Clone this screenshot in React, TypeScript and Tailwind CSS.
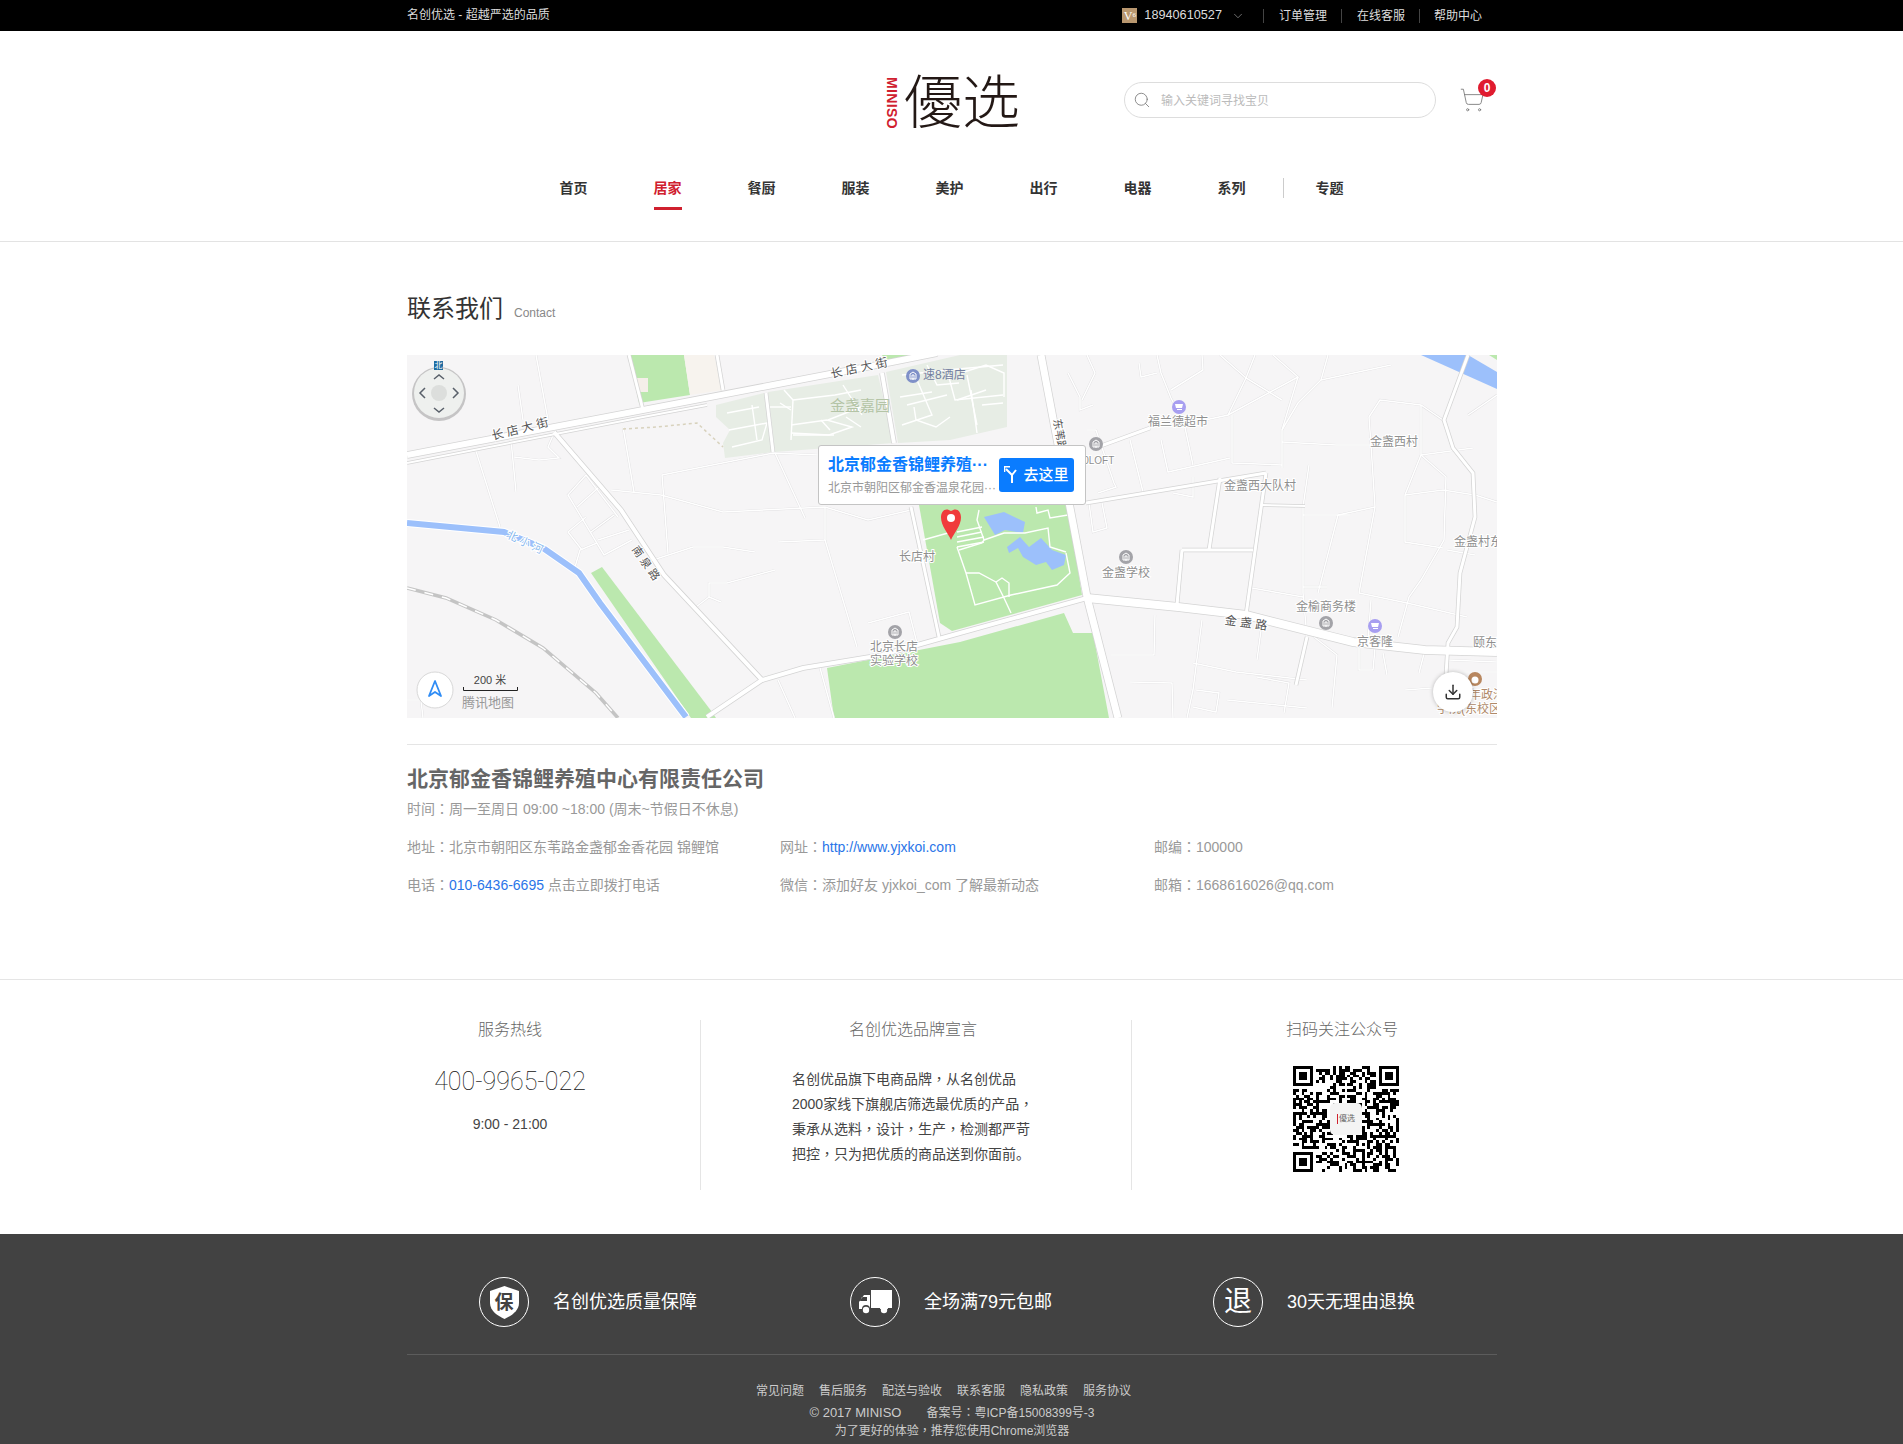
import type { ReactNode } from "react";
import { ChevronDown, Download, Search, ShoppingCart } from "lucide-react";

const NAV = ["首页", "居家", "餐厨", "服装", "美护", "出行", "电器", "系列"];
const FOOT_LINKS = ["常见问题", "售后服务", "配送与验收", "联系客服", "隐私政策", "服务协议"];
const COLON = "\uFF1A";
const COMMA = "\uFF0C";

// thin alleys on the map
const LANES = [
  "129,0 141,65", "111,30 116,65", "104,85 109,137", "107,102 132,105 152,103 141,92 147,78", "68,93 93,172",
  "216,72 227,137", "204,135 254,140 316,157 418,152 461,165 504,155", "255,120 261,198", "255,120 366,98 411,100",
  "368,98 398,163", "418,153 418,185 371,187", "418,185 450,292", "246,205 286,192 316,192 348,197",
  "368,215 320,228 302,228 302,242 314,247", "302,242 289,252", "371,325 388,363", "413,313 427,363",
  "461,268 502,257 511,292", "179,120 161,140 197,200 225,185", "179,120 211,162", "170,152 191,133", "184,177 207,160",
  "161,177 179,162", "161,177 175,195", "191,185 222,175", "168,212 173,195 190,188", "0,345 14,345 16,363",
  "750,0 754,18 764,43 777,68 786,110", "732,8 734,22 750,18", "795,0 796,15 764,35", "813,0 839,23 875,45",
  "848,0 839,23 821,60 766,72", "866,0 891,22 821,60", "891,22 875,75 875,113", "921,0 914,25 984,10",
  "914,25 891,48 875,75", "875,87 929,90 964,90", "962,62 964,90 968,152 952,238", "962,62 973,45 1014,50 1036,65",
  "1014,50 1014,100 998,140 998,187 1036,193", "1014,100 1066,93", "1014,100 1039,122 1037,185 1014,225 1002,242 991,282",
  "998,140 1036,135 1068,140 1090,147", "902,110 896,152 896,238 900,282", "931,160 968,152", "931,160 911,238",
  "896,160 943,160", "896,232 920,232", "825,60 825,108 875,110", "723,85 736,137", "754,85 761,117 823,103",
  "766,138 786,142 786,122", "682,148 686,177 700,173 695,148", "661,18 673,42 673,55 686,50", "680,0 688,18 675,45",
  "680,75 689,75 707,128 709,132 691,138", "748,260 747,300 704,300", "795,265 786,335 780,363", "855,268 850,305",
  "786,308 829,317 900,325", "907,282 930,300 925,353", "820,345 900,353", "789,335 812,338 809,357 786,352",
  "850,322 882,328 877,358", "723,327 765,328 766,363", "998,335 1025,333", "968,293 966,315 952,315 952,285",
  "1041,305 1090,307", "1041,317 1090,317", "952,238 1000,248", "964,245 961,285", "845,233 896,242",
  "1061,60 1090,40", "1040,195 1068,200", "1000,248 1060,262", "1018,295 1012,318", "976,298 980,320",
];

const PARK_PATHS = [
  "386,45 428,40 454,35", "386,45 384,85", "384,70 420,65 445,72 422,80 384,78", "436,30 455,60", "361,52 384,52",
  "377,35 386,45", "373,48 384,55", "386,80 427,80", "414,65 423,75", "439,62 454,72", "421,65 454,52",
  "320,58 352,52", "322,75 360,68 355,85 325,92", "345,50 350,85", "495,20 540,15 596,10", "540,15 548,45 596,40",
  "500,50 540,40", "510,25 525,60 495,70", "560,20 570,70", "575,50 596,48", "520,10 530,30 552,28",
  "493,42 525,37", "507,52 509,65 529,72 543,62", "550,45 579,35", "564,35 570,78", "554,18 579,10 597,18 597,42",
  "550,192 559,218 568,250 604,240 650,230 663,218 659,198", "559,218 572,218 589,227 595,223 602,228 602,242",
  "589,227 597,243 604,258", "577,185 597,178 618,178 641,173 643,192 659,197", "572,155 570,165 577,185 575,188 552,195",
  "550,177 575,172", "550,182 575,177", "550,187 577,182", "550,192 577,187", "516,185 541,178",
  "629,152 630,158 641,155 643,163 661,160",
];

const ROADS: [string, number][] = [
  ["0,100 236,55 480,8 530,-2", 6],
  ["0,108 236,62 300,50", 2],
  ["147,77 214,155 257,220 355,325 300,362", 4],
  ["355,325 396,313 475,300 553,278 680,243", 4],
  ["475,18 487,88", 4],
  ["359,38 366,97", 3],
  ["504,152 532,282", 3],
  ["222,0 236,55", 3],
  ["310,0 316,35", 3],
  ["691,92 743,73", 3],
  ["679,148 859,118", 3],
  ["813,123 802,195", 3],
  ["859,118 839,260", 3],
  ["775,195 846,195", 3],
  ["775,195 770,250", 3],
  ["855,150 898,151", 2],
  ["900,282 889,330", 3],
  ["1061,0 1037,65 1046,93 1066,118 1068,162 1053,218 1050,272 1041,288 1039,320", 3],
  ["634,0 680,242 711,363", 7],
  ["680,243 771,252 839,260 946,287 1018,295 1090,297", 8],
];

const QR_SIZE = 37;

function buildQr() {
  let seed = 20170;
  const cells: [number, number][] = [];
  const inFinder = (x: number, y: number) =>
    (x < 8 && y < 8) || (x >= QR_SIZE - 8 && y < 8) || (x < 8 && y >= QR_SIZE - 8);
  for (let y = 0; y < QR_SIZE; y++) {
    for (let x = 0; x < QR_SIZE; x++) {
      seed = (seed * 1103515245 + 12345) % 2147483648;
      if (!inFinder(x, y) && seed % 100 > 50) cells.push([x, y]);
    }
  }
  return cells;
}

const QR_CELLS = buildQr();

// full-width punctuation sits centred in the reference, which is how the TC cut draws it
function Mark({ c }: { c: string }) {
  return <span className="font-['Noto_Sans_CJK_TC'] leading-none">{c}</span>;
}

function Finder({ x, y }: { x: number; y: number }) {
  return (
    <g>
      <rect x={x} y={y} width="7" height="7" fill="#000" />
      <rect x={x + 1} y={y + 1} width="5" height="5" fill="#fff" />
      <rect x={x + 2} y={y + 2} width="3" height="3" fill="#000" />
    </g>
  );
}

function QrCode() {
  return (
    <div className="relative ml-[106px] mt-[26px] h-[106px] w-[106px]">
      <svg viewBox={`0 0 ${QR_SIZE} ${QR_SIZE}`} className="h-full w-full" shapeRendering="crispEdges">
        {QR_CELLS.map(([x, y]) => (
          <rect key={`${x}-${y}`} x={x} y={y} width="1" height="1" fill="#000" />
        ))}
        <Finder x={0} y={0} />
        <Finder x={QR_SIZE - 7} y={0} />
        <Finder x={0} y={QR_SIZE - 7} />
      </svg>
      <div className="absolute left-[37px] top-[37px] flex h-[32px] w-[32px] items-center justify-center rounded-[5px] bg-[#f4f4f4] text-[8px] text-[#666]">
        <span className="mr-px h-[10px] w-px bg-[#d0202f]" />
        優选
      </div>
    </div>
  );
}

function Label({ x, y, text, size = 12, fill = "#8f8f8f", rotate }: { x: number; y: number; text: string; size?: number; fill?: string; rotate?: number }) {
  return (
    <text
      x={x}
      y={y}
      textAnchor="middle"
      dominantBaseline="central"
      fontSize={size}
      fill={fill}
      stroke="#fff"
      strokeWidth="2"
      paintOrder="stroke"
      transform={rotate ? `rotate(${rotate} ${x} ${y})` : undefined}
    >
      {text}
    </text>
  );
}

function Poi({ x, y, kind }: { x: number; y: number; kind: "gray" | "shop" | "hotel" }) {
  const fill = kind === "shop" ? "#a79ef0" : kind === "hotel" ? "#7f90c8" : "#a3a3a8";
  return (
    <g>
      <circle cx={x} cy={y} r="7" fill={fill} />
      {kind === "shop" ? (
        <path d={`M${x - 4} ${y - 3}h8l-1 4h-6zM${x - 2} ${y + 2}h5v1h-5z`} fill="#fff" />
      ) : (
        <path d={`M${x - 3} ${y + 3}v-5l3-2 3 2v5zM${x - 1} ${y + 3}v-4h2v4z`} fill="none" stroke="#fff" strokeWidth="1" />
      )}
    </g>
  );
}

function MapView() {
  return (
    <div className="relative mt-[30px] h-[363px] w-[1090px] overflow-hidden bg-[#f6f5f6]">
      <svg viewBox="0 0 1090 363" className="block h-full w-full">
        <polygon points="222,0 277,0 283,40 232,48" fill="#bbe8ae" />
        <polygon points="277,0 307,0 316,35 283,40" fill="#f7f3ee" />
        <rect x="229" y="23" width="12" height="14" fill="#f5efe9" />
        <polygon points="309,50 357,38 366,97 318,103 316,88 323,75 309,62" fill="#e7ede5" />
        <polygon points="361,37 471,20 487,88 368,97" fill="#e7ede5" />
        <polygon points="479,17 553,0 600,0 600,72 543,85 491,88" fill="#e7ede5" />
        <polygon points="475,0 525,0 480,8" fill="#bbe8ae" />
        <polygon points="512,150 661,150 675,240 545,276 533,268" fill="#bbe8ae" />
        <polygon points="420,313 553,287 657,258 666,278 686,278 702,363 427,363" fill="#bbe8ae" />
        <polygon points="184,218 195,212 305,357 309,363 284,363" fill="#bbe8ae" />
        <polygon points="1082,0 1090,0 1090,5" fill="#bbe8ae" />
        <polygon points="577,162 597,157 618,167 616,178 598,175 588,180" fill="#9cc0fb" />
        <polygon points="600,192 613,182 622,192 634,183 645,195 659,200 657,210 645,215 639,207 629,210 616,202 611,193 602,198" fill="#9cc0fb" />
        <polygon points="1014,0 1061,0 1090,17 1090,34" fill="#9cc0fb" />

        {LANES.map((p) => (
          <polyline key={p} points={p} fill="none" stroke="#dedddf" strokeWidth="2.2" />
        ))}
        {LANES.map((p) => (
          <polyline key={`w${p}`} points={p} fill="none" stroke="#fff" strokeWidth="1.5" />
        ))}
        {PARK_PATHS.map((p) => (
          <polyline key={p} points={p} fill="none" stroke="#fff" strokeWidth="1.4" />
        ))}
        <polyline points="216,74 250,72 290,68 316,92" fill="none" stroke="#d8d2bd" strokeWidth="1.5" strokeDasharray="3 3" />

        <polyline points="0,233 39,243 89,265 136,293 189,338 211,363" fill="none" stroke="#c4c4c4" strokeWidth="3.5" />
        <polyline points="0,233 39,243 89,265 136,293 189,338 211,363" fill="none" stroke="#fff" strokeWidth="1.5" strokeDasharray="9 9" />

        {ROADS.map(([p, w]) => (
          <polyline key={`c${p}`} points={p} fill="none" stroke="#d4d4d4" strokeWidth={w + 1.5} />
        ))}
        {ROADS.map(([p, w]) => (
          <polyline key={`r${p}`} points={p} fill="none" stroke="#fff" strokeWidth={w} />
        ))}

        <polyline points="0,168 97,177 136,193 172,218 193,248 279,362" fill="none" stroke="#fff" strokeWidth="8" />
        <polyline points="0,168 97,177 136,193 172,218 193,248 279,362" fill="none" stroke="#9cc0fb" strokeWidth="6" />

        <Label x={113} y={74} text="长 店 大 街" fill="#555" rotate={-14} />
        <Label x={452} y={13} text="长 店 大 街" fill="#555" rotate={-12} />
        <Poi x={506} y={21} kind="hotel" />
        <text x={516} y={20} dominantBaseline="central" fontSize="12" fill="#7480a0">速8酒店</text>
        <text x={453} y={50} textAnchor="middle" dominantBaseline="central" fontSize="15" fill="#b4c4a6">金盏嘉园</text>
        <Label x={118} y={187} text="北 小 河" size={11} fill="#86b8ee" rotate={25} />
        <Label x={239} y={208} text="南 泉 路" size={11} fill="#555" rotate={55} />
        <Label x={510} y={202} text="长店村" />
        <Poi x={488} y={277} kind="gray" />
        <Label x={487} y={292} text="北京长店" />
        <Label x={487} y={306} text="实验学校" />
        <Label x={653} y={80} text="东苇路" size={11} fill="#555" rotate={80} />
        <Poi x={689} y={89} kind="gray" />
        <Label x={689} y={105} text="90LOFT" size={10} />
        <Poi x={772} y={52} kind="shop" />
        <Label x={771} y={67} text="福兰德超市" />
        <Label x={987} y={87} text="金盏西村" />
        <Label x={853} y={131} text="金盏西大队村" />
        <Label x={1071} y={187} text="金盏村东" />
        <Poi x={719} y={202} kind="gray" />
        <Label x={719} y={218} text="金盏学校" />
        <Label x={919} y={252} text="金榆商务楼" />
        <Poi x={919} y={268} kind="gray" />
        <Poi x={968} y={271} kind="shop" />
        <Label x={968} y={287} text="京客隆" />
        <Label x={839} y={268} text="金 盏 路" fill="#555" rotate={8} />
        <Label x={1084} y={288} text="颐东苑" />
        <circle cx={1068} cy={324} r="7" fill="#b8875f" />
        <circle cx={1068} cy={325} r="3.5" fill="#fff" />
        <Label x={1074} y={340} text="青年政治" fill="#b08a6a" />
        <Label x={1064} y={354} text="学院(东校区)" fill="#b08a6a" />

        {/* compass */}
        <circle cx={32} cy={39} r="27" fill="#8a8a8a" opacity="0.45" />
        <circle cx={32} cy={38} r="25" fill="#eef0ee" />
        <circle cx={32} cy={38} r="8" fill="#dcdedc" />
        <path d="M27 24l5-4 5 4M27 53l5 4 5-4M18 33l-5 5 5 5M46 33l5 5-5 5" fill="none" stroke="#59606a" strokeWidth="1.5" />
        <rect x={27} y={6} width="9" height="9" fill="#1e6ba0" />
        <text x={31.5} y={10.5} textAnchor="middle" dominantBaseline="central" fontSize="8" fill="#fff">北</text>

        {/* locate + scale */}
        <circle cx={28} cy={335} r="18" fill="#fff" stroke="#d8d8d8" />
        <path d="M28 326l-6 15 6-4 6 4z" fill="none" stroke="#2f8cf5" strokeWidth="1.8" strokeLinejoin="round" />
        <text x={83} y={325} textAnchor="middle" dominantBaseline="central" fontSize="11" fill="#444">200 米</text>
        <path d="M56.5 332v3.5h54V332" fill="none" stroke="#222" />
        <text x={81} y={347} textAnchor="middle" dominantBaseline="central" fontSize="13" fill="#999">腾讯地图</text>
      </svg>

      <div className="absolute left-[411px] top-[90px] flex h-[60px] w-[268px] items-start rounded-[3px] border border-[#c4c4c4] bg-white pl-[9px] pt-[8px]">
        <div className="w-[168px] shrink-0 overflow-hidden whitespace-nowrap">
          <div className="text-[16px] font-bold leading-[22px] text-[#0a7cff]">北京郁金香锦鲤养殖···</div>
          <div className="mt-[3px] text-[12px] leading-[18px] text-[#999]">北京市朝阳区郁金香温泉花园···</div>
        </div>
        <button className="ml-[3px] mt-[4px] flex h-[34px] w-[75px] shrink-0 items-center justify-center gap-[5px] rounded-[3px] bg-[#0a7cff] text-[15px] font-medium text-white">
          <svg width="14" height="18" viewBox="0 0 14 18" fill="none" stroke="#fff" strokeWidth="2">
            <path d="M8 17V9L2 3M8 9l4-5" />
            <path d="M0.5 6V0.8H6" strokeWidth="1.6" />
          </svg>
          去这里
        </button>
      </div>

      <svg className="absolute left-[534px] top-[152px]" width="20" height="33" viewBox="0 0 20 33">
        <path d="M10 33C7 26 0 19 0 10.500C0 4 4.500 0 10 4C15.500 0 20 4 20 10.500C20 19 13 26 10 33Z" fill="#f03b3b" />
        <circle cx="10" cy="11" r="4" fill="#fff" />
      </svg>

      <div className="absolute left-[1026px] top-[317px] flex h-[40px] w-[40px] items-center justify-center rounded-full bg-white shadow-[0_0_4px_rgba(0,0,0,0.25)]">
        <Download size={18} strokeWidth={2} className="text-[#333]" />
      </div>
    </div>
  );
}

function ServiceBlock() {
  return (
    <section className="mt-[84px] border-t border-[#e5e5e5] pb-[44px] pt-[40px]">
      <div className="ml-[407px] flex h-[170px] w-[1090px]">
        <div className="h-full w-[294px] border-r border-[#e5e5e5] pr-[87px] text-center">
          <h3 className="text-[16px] font-light leading-[20px] text-[#666]">服务热线</h3>
          <p className="mt-[27px] font-['Roboto'] text-[25px] font-thin leading-[30px] text-[#111]">400-9965-022</p>
          <p className="mt-[17px] text-sm leading-[20px] text-[#444]">9:00 - 21:00</p>
        </div>
        <div className="h-full w-[431px] border-r border-[#e5e5e5]">
          <h3 className="pr-[6px] text-center text-[16px] font-light leading-[20px] text-[#666]">名创优选品牌宣言</h3>
          <p className="ml-[91px] mt-[27px] text-sm leading-[25px] text-[#444]">
            名创优品旗下电商品牌<Mark c={COMMA} />从名创优品
            <br />
            2000家线下旗舰店筛选最优质的产品<Mark c={COMMA} />
            <br />
            秉承从选料<Mark c={COMMA} />设计<Mark c={COMMA} />生产<Mark c={COMMA} />检测都严苛
            <br />
            把控<Mark c={COMMA} />只为把优质的商品送到你面前。
          </p>
        </div>
        <div className="h-full flex-1 pl-[55px]">
          <h3 className="text-center text-[16px] font-light leading-[20px] text-[#666]">扫码关注公众号</h3>
          <QrCode />
        </div>
      </div>
    </section>
  );
}

function FooterBadge({ className, label, children }: { className: string; label: string; children: ReactNode }) {
  return (
    <div className={`flex items-center ${className}`}>
      <div className="flex h-[50px] w-[50px] items-center justify-center rounded-full border border-white">{children}</div>
      <span className="ml-[24px] text-[18px] leading-[24px] text-white">{label}</span>
    </div>
  );
}

export default function App() {
  return (
    <div className="min-h-[1444px] bg-white [font-family:'Liberation_Sans','Noto_Sans_CJK_SC',sans-serif]">
      <div className="h-[31px] bg-black">
        <div className="ml-[407px] flex h-full w-[1090px] items-center text-[12px] text-[#ddd]">
          <span className="-mt-[1px]">名创优选 - 超越严选的品质</span>
          <div className="ml-auto mr-[15px] flex items-center pt-[1px]">
            <span className="flex h-[15px] w-[15px] items-center justify-center bg-[#b9976f] font-['Liberation_Serif'] text-[12px] leading-none text-white">
              V<span className="text-[7px]">6</span>
            </span>
            <span className="ml-[7px] text-[12.7px]">18940610527</span>
            <ChevronDown size={14} strokeWidth={1} className="ml-[9px] text-[#bbb]" />
            <span className="ml-[18px] h-[14px] w-px bg-[#444]" />
            <span className="pl-[15px] pr-[14px]">订单管理</span>
            <span className="h-[14px] w-px bg-[#444]" />
            <span className="pl-[15px] pr-[14px]">在线客服</span>
            <span className="h-[14px] w-px bg-[#444]" />
            <span className="pl-[14px]">帮助中心</span>
          </div>
        </div>
      </div>

      <header className="h-[211px] border-b border-[#e3e3e3]">
        <div className="ml-[407px] flex w-[1090px] items-start pt-[41px]">
          <div className="ml-[480px] mt-[2px] flex h-[58px] w-[237px] items-center">
            <span className="flex h-[10px] w-[10px] shrink-0 rotate-90 items-center justify-center whitespace-nowrap text-[14px] font-bold leading-none tracking-[0.4px] text-[#d0202f]">
              MINISO
            </span>
            <span className="ml-[7px] whitespace-nowrap text-[58px] font-light leading-[58px] text-[#231815]">優选</span>
          </div>
          <div className="mt-[10px] flex h-[36px] w-[312px] items-center rounded-full border border-[#ddd] pl-[8px]">
            <Search size={18} strokeWidth={1.1} className="text-[#777]" />
            <span className="ml-[10px] mt-[1px] text-[12px] text-[#bbb]">输入关键词寻找宝贝</span>
          </div>
          <div className="relative ml-[23px] mt-[15px]">
            <ShoppingCart size={26} strokeWidth={0.8} className="text-[#777]" />
            <span className="absolute -right-[11px] -top-[8px] flex h-[18px] w-[18px] items-center justify-center rounded-full bg-[#e01b2f] text-[12px] font-bold text-white">0</span>
          </div>
        </div>
        <nav className="mt-[46px] flex justify-center text-sm font-bold leading-[20px] text-[#333]">
          {NAV.map((item, i) => (
            <span
              key={item}
              className={`h-[32px] border-b-[3px] ${i > 0 ? "ml-[66px]" : ""} ${item === "居家" ? "border-[#d0202f] text-[#d0202f]" : "border-transparent"}`}
            >
              {item}
            </span>
          ))}
          <span className="ml-[37px] h-[20px] w-px bg-[#ccc]" />
          <span className="ml-[32px]">专题</span>
        </nav>
      </header>

      <main className="ml-[407px] w-[1090px]">
        <div className="mt-[51px] flex items-baseline">
          <h1 className="text-[24px] font-normal leading-[32px] text-[#333]">联系我们</h1>
          <span className="ml-[11px] text-[12px] text-[#888]">Contact</span>
        </div>
        <MapView />
        <div className="mt-[26px] border-t border-[#e5e5e5]" />
        <h2 className="mt-[19px] text-[21px] font-bold leading-[30px] text-[#666]">北京郁金香锦鲤养殖中心有限责任公司</h2>
        <p className="mt-[5px] text-sm leading-[20px] text-[#999]">时间<Mark c={COLON} />周一至周日 09:00 ~18:00 (周末~节假日不休息)</p>
        <div className="mt-[18px] grid grid-cols-[373px_374px_1fr] gap-y-[18px] text-sm leading-[20px] text-[#999]">
          <span>地址<Mark c={COLON} />北京市朝阳区东苇路金盏郁金香花园 锦鲤馆</span>
          <span>
            网址<Mark c={COLON} /><span className="text-[#2a75e8]">http://www.yjxkoi.com</span>
          </span>
          <span>邮编<Mark c={COLON} />100000</span>
          <span>
            电话<Mark c={COLON} /><span className="text-[#2a75e8]">010-6436-6695</span> 点击立即拨打电话
          </span>
          <span>微信<Mark c={COLON} />添加好友 yjxkoi_com 了解最新动态</span>
          <span>邮箱<Mark c={COLON} />1668616026@qq.com</span>
        </div>
      </main>

      <ServiceBlock />

      <footer className="bg-[#424242] pb-[4px] pt-[43px]">
        <div className="ml-[407px] w-[1090px]">
          <div className="flex pl-[72px]">
            <FooterBadge className="w-[371px]" label="名创优选质量保障">
              <div className="relative h-[33px] w-[29px]">
                <svg viewBox="0 0 29 33" className="h-full w-full">
                  <path d="M14.500 0L29 5V17C29 25 21 30 14.500 33C8 30 0 25 0 17V5Z" fill="#fff" />
                </svg>
                <span className="absolute inset-0 flex items-center justify-center text-[19px] font-bold leading-none text-[#424242]">保</span>
              </div>
            </FooterBadge>
            <FooterBadge className="w-[363px]" label="全场满79元包邮">
              <svg width="34" height="24" viewBox="0 0 34 24" fill="#fff">
                <rect x="13" y="0" width="21" height="18" />
                <path d="M11 5H6L1 12V19H4A4 4 0 0 1 12 19V5ZM4 7H9V11H2Z" fillRule="evenodd" />
                <path d="M13 19H22A4 4 0 0 1 30 19H34V19Z" />
                <circle cx="8" cy="20" r="3.200" />
                <circle cx="26" cy="20" r="3.200" />
              </svg>
            </FooterBadge>
            <FooterBadge className="" label="30天无理由退换">
              <span className="text-[28px] leading-none text-white">退</span>
            </FooterBadge>
          </div>
          <div className="mt-[27px] border-t border-[#5c5c5c]" />
          <div className="mt-[27px] flex justify-center gap-[15px] pr-[17px] text-[12px] leading-[18px] text-[#ccc]">
            {FOOT_LINKS.map((item) => (
              <span key={item}>{item}</span>
            ))}
          </div>
          <div className="mt-[4px] flex justify-center gap-[25px] text-[12px] leading-[18px] text-[#ccc]">
            <span className="text-[13px]">© 2017 MINISO</span>
            <span>备案号<Mark c={COLON} />粤ICP备15008399号-3</span>
          </div>
          <p className="text-center text-[12px] leading-[18px] text-[#ccc]">为了更好的体验<Mark c={COMMA} />推荐您使用Chrome浏览器</p>
        </div>
      </footer>
    </div>
  );
}
